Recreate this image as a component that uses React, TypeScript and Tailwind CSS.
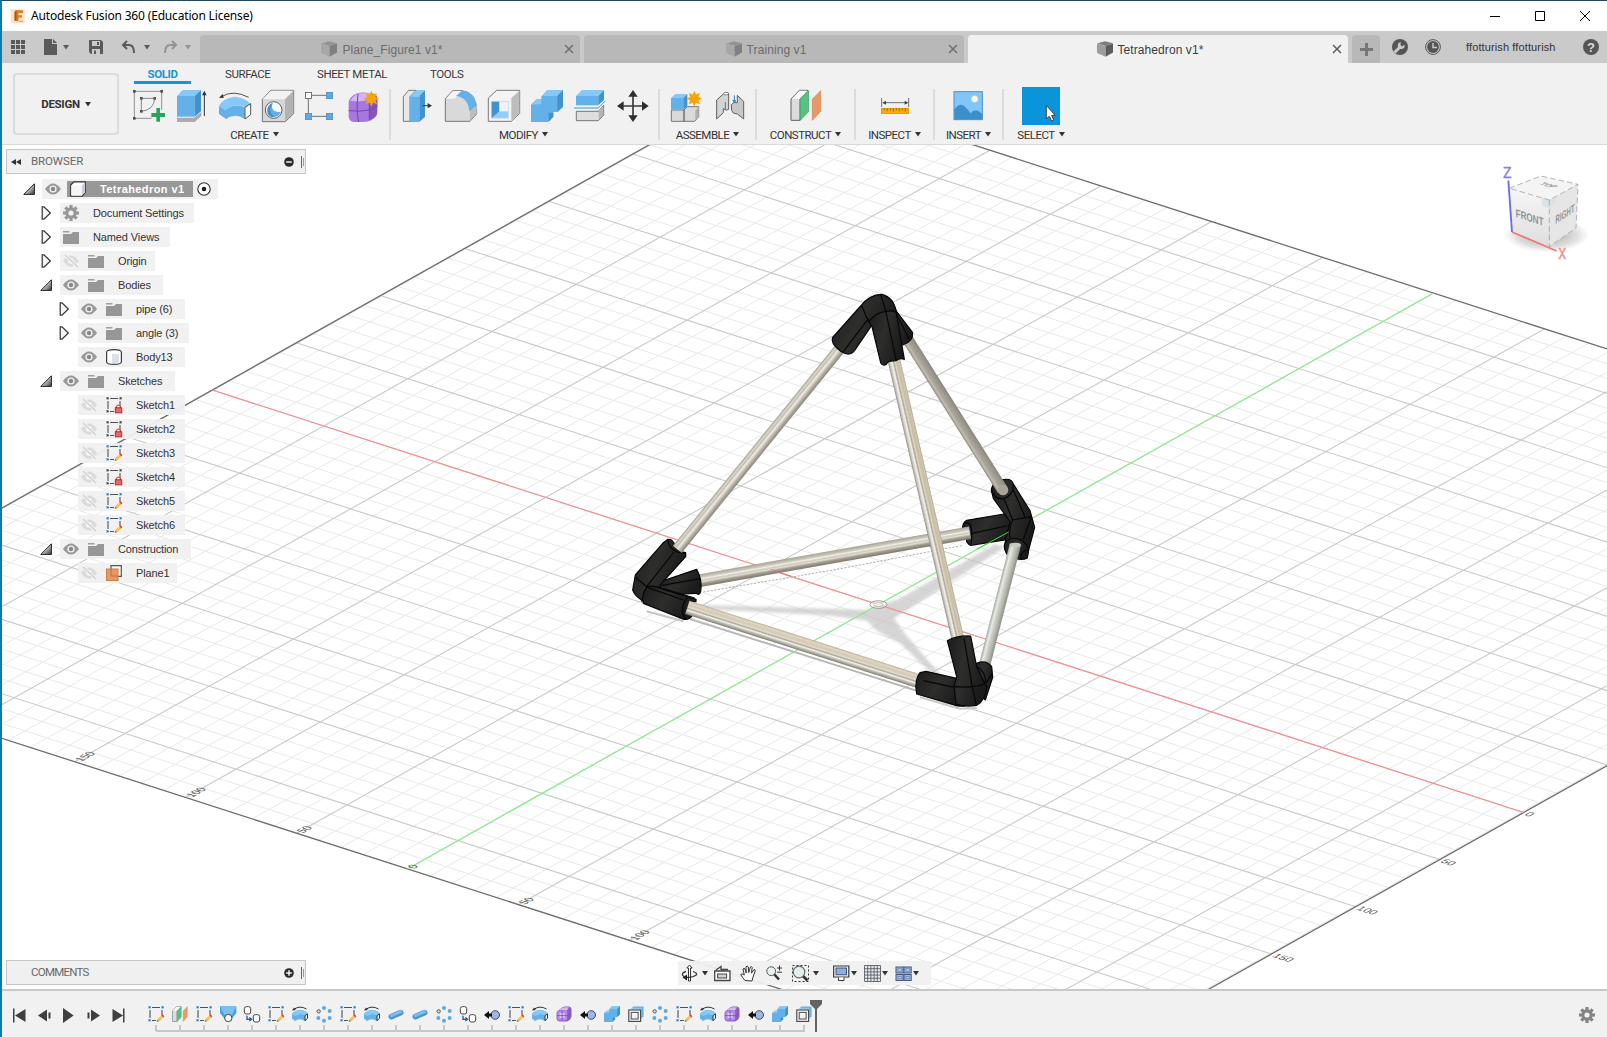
import React from "react";

const SANS = "font-['Liberation_Sans',Arial,sans-serif]";
const ROBOTO = "font-[Roboto,'Liberation_Sans',sans-serif]";

/* ---------- shared bits ---------- */

const Caret = ({ className = "" }: { className?: string }) => (
  <svg viewBox="0 0 6 5" className={"h-[5px] w-[6px] shrink-0 overflow-visible " + className}>
    <path d="M0 0H6L3 4.4Z" fill="currentColor" />
  </svg>
);

type VB = { box: string; w?: number; h?: number; className?: string; children: React.ReactNode };
const Draw = ({ box, w = 32, h = 32, className = "", children }: VB) => (
  <svg viewBox={box} width={w} height={h} className={"shrink-0 overflow-visible " + className}>
    {children}
  </svg>
);

const GREY = "#5f6164";
const BLUE = "#64b0e8";
const LIGHT = "#86c8f8";
const DARK = "#4193cf";

const Star = ({ x, y, r = 24 }: { x: number; y: number; r?: number }) => {
  const pts = Array.from({ length: 16 }, (_, i) => {
    const a = (i * Math.PI) / 8;
    const q = i % 2 ? r * 0.56 : r;
    return `${(x + q * Math.sin(a)).toFixed(1)},${(y - q * Math.cos(a)).toFixed(1)}`;
  }).join(" ");
  return <polygon points={pts} fill="#f7a30a" />;
};

/* ---------- title bar ---------- */

const TitleBar = () => (
  <div className="flex h-[30px] shrink-0 items-center bg-white pl-[8px]">
    <Draw box="30 24 46 46" w={15} h={15}>
      <rect x="32" y="24" width="43" height="44" rx="3" fill="#fbe3cd" />
      <path d="M46 28H70V36H56V43H67V50H56V62L44 60V33Z" fill="#d97f23" />
      <path d="M44 33L50 28V60L44 60Z" fill="#a85a10" />
      <path d="M58 62H70" stroke="#e9a566" strokeWidth="4" />
    </Draw>
    <span className="ml-[6px] font-['Noto_Sans',sans-serif] text-[12px] leading-none tracking-[-0.17px] text-black">
      Autodesk Fusion 360 (Education License)
    </span>
    <div className="ml-auto flex items-center gap-[35px] pr-[17px] text-black">
      <Draw box="0 0 10 10" w={10} h={10}><path d="M0 5.5H10" stroke="currentColor" /></Draw>
      <Draw box="0 0 10 10" w={10} h={10}><path d="M.5 .5H9.5V9.5H.5Z" fill="none" stroke="currentColor" /></Draw>
      <Draw box="0 0 10 10" w={10} h={10}><path d="M0 0L10 10M10 0L0 10" stroke="currentColor" /></Draw>
    </div>
  </div>
);

/* ---------- document tabs ---------- */

const DocTab = ({ name, active = false }: { name: string; active?: boolean }) => (
  <div
    className={
      "relative flex h-[28px] w-[380px] shrink-0 items-center justify-center rounded-t-[4px] pr-[16px] text-[12px] " +
      (active ? "bg-[#f1f1f1] text-[#3c3c3c]" : "bg-[#b8b8b8] text-[#6c6c6c]")
    }
  >
    <Draw box="0 0 16 16" w={16} h={16} className={active ? "" : "opacity-60"}>
      <path d="M0 2.5L8 .2L16 2.2L9 5Z" fill="#7d7d7d" />
      <path d="M0 2.8L8.6 5V15.8L0 12Z" fill="#9d9d9d" />
      <path d="M8.6 5L16 2.4V11.6L8.6 15.8Z" fill="#5c5c5c" />
    </Draw>
    <span className={SANS + " ml-[5px] mt-px tracking-[0.08px]"}>{name}</span>
    <Draw box="0 0 8 8" w={8} h={8} className={"absolute right-[7px] top-[10px] " + (active ? "text-[#5c5c5c]" : "text-[#707070]")}>
      <path d="M0 0L8 8M8 0L0 8" stroke="currentColor" strokeWidth="1.5" />
    </Draw>
  </div>
);

const TabBar = () => (
  <div className="flex h-[32px] shrink-0 items-end bg-[#cacaca]">
    <div className="flex h-full w-[198px] shrink-0 items-center pl-[9px] text-[#5a5a5a]">
      <Draw box="0 0 14 14" w={14} h={14}>
        {[0, 5, 10].map((y) => [0, 5, 10].map((x) => <rect key={`${x}${y}`} x={x} y={y} width="4" height="4" fill="currentColor" />))}
      </Draw>
      <Draw box="0 0 13 16" w={13} h={16} className="ml-[19px]"><path d="M0 0H8V5H13V16H0ZM9 0L13 4H9Z" fill="currentColor" /></Draw>
      <Caret className="ml-[6px]" />
      <Draw box="0 0 14 14" w={14} h={14} className="ml-[20px]">
        <path d="M0 0H12L14 2V14H2L0 12Z" fill="currentColor" />
        <path d="M3 1H11V6H3ZM3 9H11V14H3Z" fill="#cacaca" />
        <path d="M8 2H10V5H8ZM5 10.5H7V14H5Z" fill="currentColor" />
      </Draw>
      <Draw box="0 0 13 12" w={13} h={12} className="ml-[19px]">
        <path d="M5 0L1 4L5 8M1 4H7C11 4 12 7 12 12" fill="none" stroke="currentColor" strokeWidth="2" />
      </Draw>
      <Caret className="ml-[9px]" />
      <Draw box="0 0 13 12" w={13} h={12} className="ml-[14px] text-[#939393]">
        <path d="M8 0L12 4L8 8M12 4H6C2 4 1 7 1 12" fill="none" stroke="currentColor" strokeWidth="2" />
      </Draw>
      <Caret className="ml-[8px] text-[#939393]" />
    </div>
    <div className="flex gap-[4px]">
      <DocTab name="Plane_Figure1 v1*" />
      <DocTab name="Training v1" />
      <DocTab name="Tetrahedron v1*" active />
      <div className="flex h-[28px] w-[28px] items-center justify-center rounded-t-[4px] bg-[#b8b8b8]">
        <Draw box="0 0 13 13" w={13} h={13}><path d="M6.5 0V13M0 6.5H13" stroke="#777" strokeWidth="3" /></Draw>
      </div>
    </div>
    <div className="flex h-full flex-1 items-center pl-[12px] text-[#555]">
      <Draw box="0 0 16 16" w={16} h={16}>
        <circle cx="8" cy="8" r="8" fill="currentColor" />
        <path d="M2.5 13.5L8.5 7.5" stroke="#cacaca" strokeWidth="3" />
        <path d="M12.5 5.8A3.4 3.4 0 1 1 9 3.2L8.3 5.6L10 7.4Z" fill="#cacaca" />
      </Draw>
      <Draw box="0 0 16 16" w={16} h={16} className="ml-[17px]">
        <circle cx="8" cy="8" r="7.4" fill="none" stroke="currentColor" />
        <circle cx="8" cy="8" r="5.9" fill="currentColor" />
        <path d="M8 4V8.5H12" stroke="#cacaca" strokeWidth="1.5" fill="none" />
      </Draw>
      <span className={SANS + " ml-[25px] text-[11px] tracking-[0.12px] text-[#333]"}>ffotturish ffotturish</span>
      <div className="ml-auto mr-[8px] flex h-[16px] w-[16px] items-center justify-center rounded-full bg-[#555]">
        <span className={SANS + " text-[13px] font-bold leading-none text-[#dcdcdc]"}>?</span>
      </div>
    </div>
  </div>
);

/* ---------- ribbon icons ---------- */

const Form = () => (
  <>
    <path d="M1046 308Q1046 296 1062 284Q1076 276 1096 278L1118 280Q1134 284 1132 300V338Q1130 350 1118 358Q1108 366 1090 366H1064Q1048 366 1046 350Z" fill="#a678dd" />
    <path d="M1050 302Q1066 280 1082 280H1112L1104 300Q1080 306 1050 302Z" fill="#d5b4fb" />
    <path d="M1108 304Q1120 286 1130 290Q1134 300 1130 344Q1124 354 1108 360Z" fill="#8554bd" />
    <path d="M1046 332Q1078 336 1108 330L1132 318M1074 282Q1068 330 1076 366M1108 300V360" fill="none" stroke="#7444ad" strokeWidth="3" />
  </>
);
const FormSmall = () => (
  <>
    <path d="M3 4Q6 .5 9 .5H13Q15.5 .8 15.5 3.5V10Q15 14 11 15.5H3.5Q.5 15 .5 12V7Q.6 5 3 4Z" fill="#8a5cc2" />
    <rect x="1.2" y="4.6" width="10" height="10" rx="2" fill="#b48ce6" />
    <path d="M3 4Q6 1.2 9 1.2H13L11 4.4Z" fill="#d3b4f7" />
    <path d="M3.6 7H8.8V12H3.6Z" fill="#d9c2f8" />
    <path d="M1.2 9.6H11.5L15 7.5M6.2 4.5V14.6" fill="none" stroke="#7444ad" strokeWidth=".7" />
  </>
);
const SketchCreate = () => (
  <Draw box="399 270 96 96">
    <path d="M403 274H485V330M403 274V355H455" fill="none" stroke={GREY} strokeWidth="2" />
    {[[399, 270], [481, 270], [399, 351], [420, 291], [460, 291], [420, 330]].map(([x, y]) => <rect key={`${x}-${y}`} x={x} y={y} width="8" height="8" fill="#4c4e50" />)}
    <path d="M424 295H464Q462 330 424 334Z" fill="none" stroke={GREY} strokeWidth="2.2" />
    <path d="M469 324H480V339H495V351H480V365H469V351H454V339H469Z" fill="#27a65a" />
  </Draw>
);
const Extrude = () => (
  <Draw box="528 270 96 96">
    <path d="M531 353H582L604 336V348L584 366H531Z" fill="#acacac" />
    <path d="M531 288L548 270H603L584 288Z" fill={LIGHT} />
    <path d="M531 288H584V350H531Z" fill={BLUE} />
    <path d="M584 288L603 270V334L584 350Z" fill={DARK} />
    <path d="M613 348V284" stroke="#333" strokeWidth="3" /><path d="M606 286L613 272L620 286Z" fill="#333" />
  </Draw>
);
const RevolveShape = () => (
  <>
    <path d="M664 290Q700 268 746 292" fill="none" stroke="#333" strokeWidth="2.5" />
    <path d="M657 293L668 282L671 294Z" fill="#333" />
    <path d="M657 318Q666 296 704 290Q735 292 752 312L736 322Q706 306 676 330Z" fill={LIGHT} />
    <path d="M657 318L676 330Q706 308 734 322V357Q706 338 678 357L657 342Z" fill={BLUE} />
    <path d="M735 322L752 311V344L735 357Z" fill="#fff" stroke="#333" strokeWidth="2.5" />
  </>
);
const RevolveSmall = () => (
  <>
    <path d="M2 3.2Q8 -.8 14.5 3" fill="none" stroke="#333" strokeWidth="1" />
    <path d="M0 4.4L2 1.4L3.8 4Z" fill="#333" />
    <path d="M0 8Q2 4.4 8 4.2Q14 4.4 16 7.6V12L13 15.2Q8 11.6 3 15L0 12.4Z" fill={BLUE} />
    <path d="M0 8Q2 4.4 8 4.2Q14 4.4 16 7.6L13 9.4Q8 6.8 3 10Z" fill={LIGHT} />
    <path d="M13 9.6L15.5 8V12.2L13 14.6Z" fill="#fff" stroke="#333" strokeWidth="1" />
  </>
);
const Revolve = () => <Draw box="657 270 96 96"><RevolveShape /></Draw>;
const Hole = () => (
  <Draw box="786 270 96 96">
    <path d="M787 298L812 271H881V341L856 365H787Z" fill="#d6d6d6" stroke={GREY} strokeWidth="2.5" />
    <path d="M788 298L813 272H880L855 298Z" fill="#f2f2f2" /><path d="M855 298L880 273V340L855 364Z" fill="#b3b3b3" />
    <circle cx="821" cy="330" r="25" fill="#f8f8f8" stroke={GREY} strokeWidth="3" />
    <path d="M818 308Q808 338 842 336Q834 354 812 350Q800 344 802 326Q806 312 818 308Z" fill={DARK} />
    <path d="M818 308Q808 338 842 336Q834 350 818 346Q804 334 818 308Z" fill={BLUE} />
  </Draw>
);
const Pattern = () => (
  <Draw box="915 270 96 96">
    <path d="M925 296V340M936 286H978M936 349H978" stroke="#555" strokeWidth="2.5" />
    <rect x="916.5" y="277.5" width="18" height="18" fill="#fff" stroke="#555" strokeWidth="2.5" />
    {[[978, 276], [915, 339], [978, 339]].map(([x, y]) => <rect key={`${x}-${y}`} x={x + 1} y={y + 1} width="19" height="19" fill="#5ea9e0" stroke="#4186b8" strokeWidth="2" />)}
  </Draw>
);
const FormIcon = () => <Draw box="1044 270 96 96"><Form /><Star x={1114} y={296} /></Draw>;

const PressPull = () => (
  <Draw box="66 270 96 96">
    <path d="M70 290L86 271H108L90 290V364H70Z" fill="#e8e8e8" stroke={GREY} strokeWidth="2.5" />
    <path d="M90 290L108 270H134L118 288Z" fill={LIGHT} /><path d="M90 289H118V366H90Z" fill={BLUE} /><path d="M118 288L135 270V350L118 366Z" fill={DARK} />
    <path d="M128 317H145" stroke="#333" strokeWidth="3" /><path d="M143 309L156 317L143 325Z" fill="#333" />
  </Draw>
);
const Fillet = () => (
  <Draw box="195 270 96 96">
    <path d="M196 296L218 272H246Q290 276 290 338V342L270 364H196Z" fill="#d9d9d9" stroke={GREY} strokeWidth="2.5" />
    <path d="M198 296L219 273H244L224 296Z" fill="#f5f5f5" />
    <path d="M270 330L290 318V341L270 363Z" fill="#bcbcbc" />
    <path d="M228 288L246 272Q284 274 290 316L268 334Q264 292 228 288Z" fill={BLUE} />
  </Draw>
);
const Shell = () => (
  <Draw box="324 270 96 96">
    <path d="M325 294L350 271H419V340L394 364H325Z" fill="#f4f4f4" stroke={GREY} strokeWidth="2.5" />
    <path d="M394 294L418 272V339L394 363Z" fill="#bdbdbd" />
    <path d="M334 304H386V355H334Z" fill="#92cdf8" stroke="#e0e0e0" strokeWidth="2" />
    <path d="M335 305H358V334L335 354Z" fill={DARK} /><path d="M358 306H385V334H358Z" fill="#f1f1f1" />
  </Draw>
);
const CombineShape = () => (
  <>
    <path d="M453 314L470 298H484V290L502 270H549V320L532 336H520V350L504 366H453Z" fill={BLUE} />
    <path d="M484 290L502 270H549L532 288H484Z" fill={LIGHT} /><path d="M453 314L470 298H484V312Z" fill={LIGHT} />
    <path d="M532 288L549 270V320L532 336ZM506 338H520V350L506 366Z" fill={DARK} />
  </>
);
const Combine = () => <Draw box="453 270 96 96"><CombineShape /></Draw>;
const Split = () => (
  <Draw box="582 270 96 96">
    <path d="M588 288L606 270H672L655 288Z" fill={LIGHT} /><path d="M588 288H655V316H588Z" fill={BLUE} /><path d="M655 288L672 270V300L655 316Z" fill={DARK} />
    <path d="M589 334H655L671 316V346L655 362H589Z" fill="#dedede" stroke={GREY} strokeWidth="2.5" /><path d="M656 334L670 318V346L656 360Z" fill="#b5b5b5" />
    <path d="M582 324H655L677 302" fill="none" stroke="#fff" strokeWidth="8" />
    <path d="M582 324H655L677 302" fill="none" stroke="#2f84c4" strokeWidth="3" />
  </Draw>
);
const Move = () => (
  <Draw box="711 270 96 96">
    <path d="M759 282V352M724 318H794" stroke="#3a3a3a" strokeWidth="5" />
    <path d="M745 290L759 270L773 290ZM745 346L759 366L773 346ZM731 304L711 318L731 332ZM786 304L806 318L786 332Z" fill="#2f2f2f" />
  </Draw>
);
const NewComp = () => (
  <Draw box="873 270 96 96">
    <path d="M874 330H912V364H874ZM912 330L922 320H956V350L944 364H912Z" fill="#dadada" stroke={GREY} strokeWidth="2.5" />
    <path d="M946 332L956 321V350L946 361Z" fill="#b0b0b0" />
    <path d="M873 294L886 282H922L910 294Z" fill={LIGHT} /><path d="M873 294H910V329H873Z" fill={BLUE} /><path d="M910 294L922 282V318L910 329Z" fill={DARK} />
    <Star x={943} y={296} />
  </Draw>
);
const Joint = () => (
  <Draw box="1002 270 96 96">
    <path d="M1010 300L1030 282Q1038 274 1046 280V328Q1040 334 1030 326V338L1010 357Z" fill="#d4d4d4" stroke={GREY} strokeWidth="3" />
    <ellipse cx="1038" cy="281" rx="7" ry="4" fill="#fafafa" stroke={GREY} strokeWidth="2" />
    <path d="M1054 314Q1060 304 1072 308V286L1091 304V357L1072 342Q1058 342 1055 332Z" fill="#c7c7c7" stroke={GREY} strokeWidth="3" />
    <path d="M1036 330V306M1063 286V302" stroke="#2a86c6" strokeWidth="3" />
    <path d="M1057 300L1063 310L1069 300Z" fill="#2a86c6" />
  </Draw>
);
const PlanesShape = () => (
  <>
    <path d="M153 297L178 271H204L180 297V361H153Z" fill="#dcdcdc" stroke={GREY} strokeWidth="3" /><path d="M155 296L179 272H202L180 296Z" fill="#fafafa" />
    <path d="M181 298L206 272V334L181 361Z" fill="#54c482" stroke="#31a261" strokeWidth="2" />
    <path d="M217 298L242 272V334L217 361Z" fill="#e79a67" stroke="#d07d46" strokeWidth="2" />
  </>
);
const Construct = () => <Draw box="150 270 96 96"><PlanesShape /></Draw>;
const Inspect = () => (
  <Draw box="417 270 96 96">
    <path d="M425 294V321M506 294V321M430 308H500" stroke="#555" strokeWidth="2.5" />
    <path d="M427 308L438 302V314ZM505 308L494 302V314Z" fill="#444" />
    <rect x="424" y="325" width="82" height="16" fill="#ffaa00" stroke="#d88d00" strokeWidth="2" />
    {[433, 442, 451, 460, 469, 478, 487, 496].map((x, i) => <path key={x} d={`M${x} 325v${i % 2 ? 9 : 6}`} stroke="#70450a" strokeWidth="2" />)}
  </Draw>
);
const Insert = () => (
  <Draw box="640 270 96 96">
    <rect x="643" y="275" width="85" height="84" fill="#80c6fb" stroke="#4990c5" strokeWidth="3" />
    <path d="M644 328Q662 302 680 324L693 340Q708 320 727 342V358H644Z" fill="#3c8fcb" />
    <circle cx="705" cy="297" r="10" fill="#fbfbe2" stroke="#cfdcba" strokeWidth="2" />
  </Draw>
);
const Select = () => (
  <Draw box="846 261 114 114" w={38} h={38} className="bg-[#0a94dc]">
    <path d="M858 330Q850 300 872 282Q895 266 920 276Q945 286 940 312M858 330Q866 350 888 346L912 325" fill="none" stroke="#12a58f" strokeWidth="2.5" strokeDasharray="9 6" />
    <path d="M919 316V356L928 349L935 363L941 360L935 346H945Z" fill="#fff" stroke="#333" strokeWidth="2.5" />
  </Draw>
);

const Group = ({ label, className, children, labelClass = "" }: { label: string; className: string; children: React.ReactNode; labelClass?: string }) => (
  <div className={"flex h-[51px] shrink-0 flex-col items-center border-r-2 border-[#dcdcdc] " + className}>
    <div className="mt-[1px] flex h-[32px] items-center gap-[11px]">{children}</div>
    <div className={"mt-[6px] flex items-center gap-[4px] " + labelClass}>
      <span className={ROBOTO + " text-[11.5px] leading-[14px] tracking-[-0.5px] text-[#333]"}>{label}</span>
      <Caret className="-mt-[2px] text-[#333]" />
    </div>
  </div>
);

const Ribbon = () => (
  <div className="flex h-[82px] shrink-0 border-b border-[#d9d9d9] bg-[#f1f1f1]">
    <div className="ml-[11px] mt-[10px] flex h-[62px] w-[106px] shrink-0 items-center justify-center gap-[5px] rounded-[4px] border-2 border-[#dcdcdc]">
      <span className={ROBOTO + " mt-px text-[11.5px] font-bold tracking-[-0.3px] text-[#333]"}>DESIGN</span>
      <Caret className="text-[#333]" />
    </div>
    <div className="flex flex-col">
      <div className={ROBOTO + " flex h-[21px] items-start text-[11.5px] leading-[22px] tracking-[-0.4px] text-[#3a3a3a]"}>
        <div className="ml-[15px] h-[21px] w-[57px] border-b-[3px] border-[#1795d4] text-center font-bold text-[#1795d4]">SOLID</div>
        <span className="ml-[34px] w-[47px] whitespace-nowrap">SURFACE</span>
        <span className="ml-[45px] w-[68px] whitespace-nowrap">SHEET METAL</span>
        <span className="ml-[45px] whitespace-nowrap">TOOLS</span>
      </div>
      <div className="mt-[5px] flex">
        <Group label="CREATE" className="w-[272px] pl-[4px]" labelClass="-ml-[3px]">
          <SketchCreate /><Extrude /><Revolve /><Hole /><Pattern /><FormIcon />
        </Group>
        <Group label="MODIFY" className="w-[269px] pl-[2px]" labelClass="-ml-[4px]">
          <PressPull /><Fillet /><Shell /><Combine /><Split /><Move />
        </Group>
        <Group label="ASSEMBLE" className="w-[97px] pl-[2px]" labelClass="-ml-[2px]"><NewComp /><Joint /></Group>
        <Group label="CONSTRUCT" className="w-[99px]"><Construct /></Group>
        <Group label="INSPECT" className="w-[79px]"><Inspect /></Group>
        <Group label="INSERT" className="w-[69px]"><Insert /></Group>
        <Group label="SELECT" className="w-[76px] border-transparent"><Select /></Group>
      </div>
    </div>
  </div>
);

/* ---------- browser tree ---------- */

const Eye = () => (
  <Draw box="0 0 16 12" w={16} h={12}>
    <path d="M0 6Q4 .5 8 .5T16 6Q12 11.5 8 11.5T0 6Z" fill="#989898" />
    <circle cx="8" cy="6" r="3.6" fill="#f0f0f0" /><circle cx="8" cy="6" r="2.2" fill="#888" />
  </Draw>
);
const EyeOff = () => (
  <Draw box="0 0 16 12" w={16} h={12}>
    <path d="M0 6Q4 .5 8 .5T16 6Q12 11.5 8 11.5T0 6Z" fill="#dadada" />
    <circle cx="8" cy="6" r="3" fill="#f3f3f3" />
    <path d="M2 0L15 12" stroke="#f3f3f3" strokeWidth="3.4" /><path d="M2 0L15 12" stroke="#d2d2d2" strokeWidth="1.5" />
  </Draw>
);
const Folder = () => (
  <Draw box="0 0 16 13" w={16} h={13}>
    <path d="M0 3H8L10 1H16V13H0Z" fill="#979797" /><path d="M0 .8H6.5" stroke="#979797" strokeWidth="1.4" />
  </Draw>
);
const Gear = ({ c = "#979797", hole = "#f0f0f0" }: { c?: string; hole?: string }) => (
  <Draw box="-8 -8 16 16" w={16} h={16}>
    {[0, 45, 90, 135].map((a) => <rect key={a} x="-1.6" y="-8" width="3.2" height="16" fill={c} transform={`rotate(${a})`} />)}
    <circle r="5.7" fill={c} /><circle r="2.6" fill={hole} />
  </Draw>
);
const SketchBase = ({ dot }: { dot: string }) => (
  <>
    <path d="M2 4V12M4 1.5H12M14 4V9M4 14.5H8" fill="none" stroke="#4e5052" strokeWidth="1.1" />
    {[[0, 0], [13, 0], [0, 13]].map(([x, y]) => <rect key={`${x}-${y}`} x={x + 0.5} y={y + 0.2} width="2.2" height="2.2" fill={dot} />)}
  </>
);
const SketchEdit = () => (
  <Draw box="0 0 16 16" w={16} h={16}>
    <SketchBase dot="#1f86d0" />
    <path d="M9 15.6L9.6 12.8L13.4 9.4L15.4 11.4L11.8 15Z" fill="#f8c155" />
    <path d="M13.4 9.4L14.6 8.3L16.4 10.2L15.3 11.4Z" fill="#e8362c" /><path d="M8.6 16L9.4 13.6L11 15.2Z" fill="#8a7a60" />
  </Draw>
);
const SketchLock = () => (
  <Draw box="0 0 16 16" w={16} h={16}>
    <SketchBase dot="#4a4a4a" />
    <path d="M10.4 11V9.4Q12.4 6.6 14.4 9.4V11" fill="none" stroke="#d33c40" strokeWidth="1.2" />
    <rect x="9.3" y="10.8" width="6.4" height="5" fill="#e26a6c" stroke="#b52b30" />
  </Draw>
);
const BodyIcon = () => (
  <Draw box="0 0 16 16" w={16} h={16}>
    <path d="M.6 3Q1 .6 8 .6T15.4 3V13Q15 15.4 8 15.4T.6 13Z" fill="#fff" stroke="#3c3c3c" strokeWidth="1.2" />
    <path d="M6 5H13V14H6Z" fill="#dcdfe6" />
  </Draw>
);
const PlaneIcon = () => (
  <Draw box="0 0 16 16" w={16} h={16}>
    <path d="M5 .7H15.3V11.3H5Z" fill="#fafafa" stroke="#555" strokeWidth="1.2" />
    <rect x=".5" y="4" width="11.5" height="11.5" fill="#e49a66" stroke="#cf7c40" /><path d="M5 4V11H12" stroke="#b87045" fill="none" />
  </Draw>
);
const RootCube = () => (
  <Draw box="0 0 16 16" w={16} h={16}>
    <path d="M.7 4L4 .8H15.2V11.5L12 15.2H.7Z" fill="#fff" stroke="#333" strokeWidth="1.2" />
    <path d="M12 4.4L15 1.4V11.4L12 14.6Z" fill="#c8ccd6" /><path d="M1.4 4.6H12V14.6H1.4Z" fill="#f4f5f8" />
  </Draw>
);

const Twisty = ({ open }: { open?: boolean }) =>
  open === undefined ? <span className="w-[12px] shrink-0" /> : open ? (
    <Draw box="0 0 12 12" w={12} h={12}>
      <defs><linearGradient id="tw" x1="0" y1="0" x2="1" y2="1"><stop offset=".4" stopColor="#ddd" /><stop offset="1" stopColor="#333" /></linearGradient></defs>
      <path d="M.8 11.4H11.4V.8Z" fill="url(#tw)" stroke="#222" strokeWidth="1" />
    </Draw>
  ) : (
    <Draw box="-1 0 12 14" w={12} h={14}>
      <path d="M1.2 .8H3L9.4 7L3 13.2H1.2Z" fill="#f5f5f5" stroke="#333" strokeWidth="1.2" />
    </Draw>
  );

type Row = { name: string; level: 1 | 2; w: number; open?: boolean; eye?: "on" | "off"; icon: React.ReactNode };
const ROWS: Row[] = [
  { name: "Document Settings", level: 1, w: 134, open: false, icon: <Gear /> },
  { name: "Named Views", level: 1, w: 110, open: false, icon: <Folder /> },
  { name: "Origin", level: 1, w: 95, open: false, eye: "off", icon: <Folder /> },
  { name: "Bodies", level: 1, w: 103, open: true, eye: "on", icon: <Folder /> },
  { name: "pipe (6)", level: 2, w: 107, open: false, eye: "on", icon: <Folder /> },
  { name: "angle (3)", level: 2, w: 111, open: false, eye: "on", icon: <Folder /> },
  { name: "Body13", level: 2, w: 107, eye: "on", icon: <BodyIcon /> },
  { name: "Sketches", level: 1, w: 115, open: true, eye: "on", icon: <Folder /> },
  { name: "Sketch1", level: 2, w: 107, eye: "off", icon: <SketchLock /> },
  { name: "Sketch2", level: 2, w: 107, eye: "off", icon: <SketchLock /> },
  { name: "Sketch3", level: 2, w: 107, eye: "off", icon: <SketchEdit /> },
  { name: "Sketch4", level: 2, w: 107, eye: "off", icon: <SketchLock /> },
  { name: "Sketch5", level: 2, w: 107, eye: "off", icon: <SketchEdit /> },
  { name: "Sketch6", level: 2, w: 107, eye: "off", icon: <SketchEdit /> },
  { name: "Construction", level: 1, w: 131, open: true, eye: "on", icon: <Folder /> },
  { name: "Plane1", level: 2, w: 99, eye: "off", icon: <PlaneIcon /> },
];

const PanelHeader = ({ title, plus = false }: { title: string; plus?: boolean }) => (
  <div className="flex h-[25px] w-[300px] items-center border border-[#c6c6c6] bg-[#f0f0f0]">
    <div className="ml-[4px] w-[20px]">
      {!plus && <Draw box="0 0 10 6" w={10} h={6}><path d="M5 0V6L0 3ZM10 0V6L5 3Z" fill="#333" /></Draw>}
    </div>
    <span className={ROBOTO + " text-[11.5px] text-[#686868] " + (plus ? "tracking-[-0.75px]" : "tracking-[-0.1px]")}>{title}</span>
    <Draw box="0 0 10 10" w={10} h={10} className="ml-auto">
      <circle cx="5" cy="5" r="4.8" fill="#2b2b2b" /><path d="M2.2 5H7.8" stroke="#fff" strokeWidth="1.4" />
      {plus && <path d="M5 2.2V7.8" stroke="#fff" strokeWidth="1.4" />}
    </Draw>
    <span className="ml-[7px] mr-px flex gap-[1px]"><i className="h-[12px] w-px bg-[#666]" /><i className="h-[8px] w-px self-center bg-[#999]" /></span>
  </div>
);

const Browser = () => (
  <div className="flex flex-col items-start">
    <PanelHeader title="BROWSER" />
    <div className="mt-[5px] flex h-[20px] items-center pl-[17px]">
      <Twisty open />
      <div className="ml-[7px] flex h-[20px] w-[176px] items-center bg-[#f0f0f0]/95 pl-[3px]">
        <Eye />
        <div className="ml-[6px] flex h-[16px] w-[126px] items-center bg-[#989898] pl-[3px]">
          <RootCube />
          <span className={SANS + " ml-[14px] whitespace-nowrap text-[11px] font-bold tracking-[0.42px] text-white"}>Tetrahedron v1</span>
        </div>
        <Draw box="0 0 14 14" w={14} h={14} className="ml-[4px]">
          <circle cx="7" cy="7" r="6.2" fill="#fff" stroke="#333" strokeWidth="1.1" /><circle cx="7" cy="7" r="2.3" fill="#222" />
        </Draw>
      </div>
    </div>
    {ROWS.map((r) => (
      <div key={r.name} className={"mt-[4px] flex h-[20px] items-center " + (r.level === 1 ? "pl-[34px]" : "pl-[52px]")}>
        <Twisty open={r.open} />
        <div className="ml-[8px] flex h-[20px] items-center bg-[#f0f0f0]/95 pl-[3px]" style={{ width: r.w }}>
          {r.eye && <span className="mr-[9px]">{r.eye === "on" ? <Eye /> : <EyeOff />}</span>}
          {r.icon}
          <span className={SANS + " ml-[14px] mt-px whitespace-nowrap text-[11px] tracking-[-0.12px] text-[#333]"}>{r.name}</span>
        </div>
      </div>
    ))}
  </div>
);

/* ---------- 3D viewport ---------- */

const O = [878.5, 604.6];
const U = [110.95, 35.73];
const V = [84.1, -47.2];
const U0 = -6.005, U1 = 5.816, V0 = -5.6, V1 = 6.6;
const P = (u: number, v: number) => [O[0] + u * U[0] + v * V[0], O[1] + u * U[1] + v * V[1]];
const seg = (a: number[], b: number[]) => `M${a[0].toFixed(1)} ${a[1].toFixed(1)}L${b[0].toFixed(1)} ${b[1].toFixed(1)}`;
const minor: string[] = [];
const major: string[] = [];
for (let i = -30; i <= 29; i++) (i % 5 ? minor : major).push(seg(P(i / 5, V0), P(i / 5, V1)));
for (let j = -28; j <= 33; j++) (j % 5 ? minor : major).push(seg(P(U0, j / 5), P(U1, j / 5)));
const outline = [P(U0, V0), P(U1, V0), P(U1, V1), P(U0, V1)].map((p) => p.join(",")).join(" ");

type Stop = [number, string];
const TUBES: Record<string, { a: [number, number]; b: [number, number]; w: number; stops: Stop[] }> = {
  upperLeft: { a: [722, 233], b: [232, 838], w: 34, stops: [[0, "#8a8578"], [0.25, "#b1ac9f"], [0.45, "#dedad0"], [0.55, "#f0ede5"], [0.66, "#c3beb1"], [0.82, "#dad6cb"], [1, "#a39e91"]] },
  front: { a: [880, 262], b: [1074, 1108], w: 38, stops: [[0, "#b3a78d"], [0.12, "#d0c6b0"], [0.3, "#c8bda5"], [0.45, "#ddd5c2"], [0.56, "#aaa598"], [0.68, "#f4f2ec"], [0.84, "#d2d0c8"], [1, "#918e82"]] },
  upperRight: { a: [922, 206], b: [1208, 660], w: 34, stops: [[0, "#8b867b"], [0.3, "#9d988d"], [0.6, "#aaa59b"], [0.8, "#c1bcb2"], [1, "#8d887e"]] },
  back: { a: [298, 932], b: [1110, 788], w: 38, stops: [[0, "#a8a396"], [0.25, "#cbc7bb"], [0.38, "#f1eee5"], [0.5, "#cdc8bc"], [0.6, "#e2ded4"], [0.76, "#a39d90"], [1, "#7f796d"]] },
  base: { a: [262, 1012], b: [958, 1234], w: 42, stops: [[0, "#b9ae99"], [0.14, "#e0d6c2"], [0.34, "#d3c9b5"], [0.48, "#e4dccb"], [0.58, "#a9a598"], [0.68, "#f4f2ec"], [0.82, "#bbb9ae"], [1, "#7f7c71"]] },
  right: { a: [1246, 824], b: [1154, 1184], w: 34, stops: [[0, "#8b8e85"], [0.3, "#b4b7ae"], [0.55, "#cdd0c8"], [0.75, "#e9ebe6"], [1, "#a3a69d"]] },
};

const Tube = ({ id }: { id: string }) => {
  const { a, b, w, stops } = TUBES[id];
  const len = Math.hypot(b[0] - a[0], b[1] - a[1]);
  const deg = (Math.atan2(b[1] - a[1], b[0] - a[0]) * 180) / Math.PI;
  return (
    <g transform={`translate(${a[0]} ${a[1]}) rotate(${deg.toFixed(3)})`}>
      <linearGradient id={"tube-" + id} x1="0" y1="0" x2="0" y2="1">
        {stops.map(([o, c]) => <stop key={o} offset={o} stopColor={c} />)}
      </linearGradient>
      <rect x="0" y={-w / 2} width={len} height={w} fill={`url(#tube-${id})`} />
    </g>
  );
};

const Rubber = ({ children }: { children: React.ReactNode }) => (
  <g fill="url(#rubber)" stroke="#060606" strokeWidth="3.6" strokeLinejoin="round">{children}</g>
);

const Model = () => (
  <g transform="translate(600 270) scale(.33333)">
    <g fill="none">
      <path d="M140 1024L250 1054" stroke="#c4c4c4" strokeWidth="6" />
      <path d="M270 1048L950 1262" stroke="#b5b5b5" strokeWidth="5" />
      <path d="M290 1030L945 1240" stroke="#cfcfcf" strokeWidth="9" />
      <path d="M960 1282L1080 1316L1130 1314" stroke="#cacaca" strokeWidth="6" />
      <path d="M310 966L700 900L1090 826" stroke="#b0b0b0" strokeWidth="3" strokeDasharray="7 4" />
    </g>

    {/* right connector */}
    <Rubber>
      <path d="M1100 751L1212 732L1240 745V800L1225 808L1112 826Q1106 824 1100 815L1098 795L1088 780Q1086 760 1100 751Z" />
      <path d="M1112 765Q1118 790 1113 822M1112 765Q1100 752 1090 762M1116 790L1220 768" fill="none" />
      <path d="M1174 660Q1178 630 1215 628Q1236 626 1240 642L1290 722L1304 772L1280 862Q1250 840 1215 820L1230 755L1180 685Z" />
      <path d="M1174 660Q1182 690 1212 686Q1242 674 1240 642M1212 686L1238 750L1294 740M1240 660L1275 740M1238 750Q1225 775 1230 805M1294 740L1270 808" fill="none" />
      <path d="M1214 822Q1226 800 1252 806Q1280 814 1286 840L1282 864Q1262 875 1225 858Q1210 840 1214 822Z" />
      <path d="M1262 866Q1262 840 1286 840" fill="none" />
    </Rubber>
    <path d="M1130 838L1226 786" stroke="#3ddc3d" strokeWidth="3" />
    <Tube id="upperRight" />
    <circle cx="1209" cy="660" r="16" fill="#a8a399" />
    <Tube id="back" />
    <path d="M512 898L572 918" stroke="#f06a6a" strokeWidth="3" opacity=".7" />

    {/* left connector */}
    <Rubber>
      <path d="M182 935L290 898Q308 930 302 965Q298 978 288 970L180 975Z" />
      <path d="M186 946L302 926" fill="none" />
      <path d="M204 808Q215 806 222 820Q230 846 257 848V860L188 936L140 1000Q105 980 98 960L106 915L190 818Z" />
      <path d="M204 812Q210 848 255 850M222 846L140 950L106 922M140 950L125 995" fill="none" />
      <path d="M142 950Q160 944 190 958L288 988V995Q266 995 264 1012Q266 1036 276 1038Q268 1050 252 1048L130 1000Q122 975 142 950Z" />
      <path d="M142 952L250 990M262 982Q236 1015 256 1046M190 956L284 984" fill="none" />
    </Rubber>
    <Tube id="upperLeft" />
    <Tube id="base" />
    <Tube id="right" />
    <ellipse cx="1246" cy="825" rx="17" ry="7" fill="#c9ccc4" />

    {/* top connector */}
    <Rubber>
      <path d="M858 85Q880 95 890 125L938 188Q940 215 908 225L884 180Z" />
      <path d="M888 130L928 208" fill="none" />
      <path d="M782 108Q808 74 845 73Q882 82 888 125L814 168L765 240Q750 262 722 244Q690 220 698 202Z" />
      <path d="M784 105L806 155M806 145L730 245M842 74L858 125" fill="none" />
    </Rubber>
    <Tube id="front" />
    <Rubber>
      <path d="M806 155Q825 128 858 124Q882 120 889 128L913 268Q900 262 888 272Q862 272 860 282Q848 290 842 278L816 170Z" />
      <path d="M858 126L888 270" fill="none" />
    </Rubber>

    {/* bottom connector */}
    <Rubber>
      <path d="M1130 1180Q1158 1168 1175 1190L1178 1222L1156 1290L1120 1250Z" />
      <path d="M1132 1190Q1156 1205 1158 1238L1176 1212" fill="none" />
      <path d="M978 1204L1070 1225L1100 1306Q1080 1312 1060 1304L950 1272Q942 1230 960 1208Z" />
      <path d="M970 1232L1062 1252" fill="none" />
      <path d="M1042 1112Q1070 1096 1112 1098L1130 1190L1160 1252Q1158 1290 1130 1306Q1095 1312 1068 1302L1062 1250L1070 1220Z" />
      <path d="M1092 1104L1116 1245L1128 1304M1064 1250Q1130 1255 1158 1238" fill="none" />
    </Rubber>
  </g>
);

const AxisLabel = ({ u, t }: { u: number; t: string }) => {
  const p = P(u, V0);
  return <text transform={`matrix(.885 -.497 1.05 .34 ${p[0] + 6.5} ${p[1]})`} fontSize="10">{t}</text>;
};
const SideLabel = ({ v, t }: { v: number; t: string }) => {
  const p = P(U1, v);
  return <text transform={`matrix(1.05 .34 -.885 .497 ${p[0]} ${p[1] + 2.5})`} fontSize="10">{t}</text>;
};

const Scene = () => (
  <svg viewBox="2 145 1605 844" width={1605} height={844} className="block">
    <defs>
      <linearGradient id="rubber" x1="0" y1="0" x2="1" y2=".4">
        <stop offset="0" stopColor="#1b1b1b" /><stop offset=".5" stopColor="#2e2e2d" /><stop offset="1" stopColor="#1a1a1a" />
      </linearGradient>
      <filter id="soft" x="-5%" y="-5%" width="110%" height="110%"><feGaussianBlur stdDeviation="4" /></filter>
    </defs>
    <path d={minor.join("")} stroke="#e9e9e9" strokeWidth="1" fill="none" />
    <path d={major.join("")} stroke="#c9c9c9" strokeWidth="1.1" fill="none" />
    <polygon points={outline} fill="none" stroke="#6e6e6e" strokeWidth="1.3" />
    <path transform="translate(600 270) scale(.33333)" fill="#c0c0c0" opacity=".65" filter="url(#soft)"
      d="M285 1004L800 1020L900 985L1185 822L1215 832L930 1015L882 1045L910 1085L1030 1225L990 1205L900 1120L830 1082L800 1052L680 1036L290 1016Z" />
    <path d={seg(P(U0, 0), P(U1, 0))} stroke="#ff8a8a" strokeWidth="1.1" />
    <path d={seg(P(0, V0), P(0, V1))} stroke="#86f386" strokeWidth="1.1" />
    <ellipse cx="878.5" cy="604.6" rx="8.5" ry="3.8" fill="#fff" fillOpacity=".4" stroke="#9a9a9a" />
    <ellipse cx="878.5" cy="604.6" rx="4.5" ry="2" fill="#fff" fillOpacity=".5" stroke="#b5b5a0" strokeWidth=".8" />
    <g fontFamily="'Liberation Sans', sans-serif" fill="#555">
      <AxisLabel u={-3} t="150" /><AxisLabel u={-2} t="100" /><AxisLabel u={-1} t="50" />
      <AxisLabel u={0} t="0" /><AxisLabel u={1} t="50" /><AxisLabel u={2} t="100" />
      <SideLabel v={0} t="0" /><SideLabel v={-1} t="50" /><SideLabel v={-2} t="100" /><SideLabel v={-3} t="150" />
    </g>
    <Model />
  </svg>
);

const ViewCube = () => (
  <Draw box="1005 480 315 306" w={105} h={102}>
    <defs>
      <radialGradient id="cs"><stop offset="0" stopColor="#888" stopOpacity=".8" /><stop offset=".7" stopColor="#aaa" stopOpacity=".4" /><stop offset="1" stopColor="#bbb" stopOpacity="0" /></radialGradient>
      <linearGradient id="cf" x1="0" y1="0" x2="0" y2="1"><stop offset="0" stopColor="#f6f6f6" /><stop offset="1" stopColor="#dedede" /></linearGradient>
    </defs>
    <ellipse cx="1160" cy="705" rx="128" ry="52" fill="url(#cs)" />
    <path d="M1048 565L1142 528L1254 553L1168 600Z" fill="#f4f4f4" />
    <path d="M1048 565L1168 600V740L1056 696Z" fill="url(#cf)" />
    <path d="M1168 600L1254 553L1248 684L1168 740Z" fill="#e6e6e6" />
    <path d="M1146 592L1168 600L1186 590V615L1168 625L1146 617Z" fill="#dde2e7" />
    <path d="M1048 565L1142 528L1254 553L1168 600ZM1168 600V740L1248 684L1254 553" fill="none" stroke="#a6a6a6" strokeWidth="2.5" strokeDasharray="17 9" />
    <path d="M1045 542L1056 696" stroke="#6a6af0" strokeWidth="5.5" />
    <path d="M1056 696L1190 753" stroke="#ee7a7a" strokeWidth="5.5" />
    <g fontFamily="'Liberation Sans', sans-serif" fontWeight="bold" fill="#8f959a">
      <text transform="matrix(.74 .24 .03 1.05 1067 651)" fontSize="33">FRONT</text>
      <text transform="matrix(.56 -.36 -.03 1.05 1186 672)" fontSize="33">RIGHT</text>
      <text transform="matrix(.95 .24 -1 .38 1136 553)" fontSize="23">TOP</text>
    </g>
    <g fontFamily="Roboto, sans-serif" fontSize="43" strokeWidth="1.2">
      <text x="1029" y="533" fill="#8080f2" stroke="#8080f2">Z</text><text x="1195" y="777" fill="#f48f8f" stroke="#f48f8f" textLength="24" lengthAdjust="spacingAndGlyphs">X</text>
    </g>
  </Draw>
);

const NavBar = () => (
  <div className="flex h-[24px] w-[253px] items-center bg-[#f0f0f0]/95 text-[#333]">
    <Draw box="0 0 17 17" w={17} h={17} className="ml-[3px]">
      <path d="M7.5 16V3H5.8L8.5 0L11.2 3H9.5V16Z" fill="#fff" stroke="#333" /><path d="M5 6.5Q1 7.5 1.5 10Q3 12.5 8 12.5M12 6.5Q17 8 15 10.2Q12 12 8 12.4" fill="none" stroke="#333" strokeWidth="1.3" />
      <path d="M1.5 12.5L6 9.5V15.5Z" fill="#222" />
    </Draw>
    <Caret className="ml-[4px]" />
    <Draw box="0 0 17 17" w={17} h={17} className="ml-[6px]">
      <path d="M.7 6H16V15.5H.7Z" fill="#fff" stroke="#444" strokeWidth="1.3" /><rect x="3.6" y="9" width="9" height="4" fill="#cdd2da" stroke="#444" /><path d="M2 5L7 1.5V4.5H14" fill="none" stroke="#444" strokeWidth="1.3" />
    </Draw>
    <Draw box="0 0 17 17" w={17} h={17} className="ml-[9px]">
      <path d="M5 15.5Q2 12 .8 9.5Q1.5 8 4.3 10L3 4Q3.8 2.6 5 4L6.2 8L6 1.8Q7.2 .4 8.2 1.8L8.8 7.5L10.4 2Q11.8 1 12.2 2.6L11.4 8.2L13.8 4.8Q15.4 4.2 15.2 6L13 12L12 16Z" fill="#fff" stroke="#333" strokeWidth="1" />
    </Draw>
    <Draw box="0 0 17 17" w={17} h={17} className="ml-[9px]">
      <path d="M8 9L13 14.5" stroke="#333" strokeWidth="2.6" /><circle cx="5.2" cy="6.2" r="4.4" fill="#eaf1f3" stroke="#555" /><path d="M11 3H16M13.5 .5V5.5M11 7.2H16" stroke="#333" strokeWidth="1" />
    </Draw>
    <Draw box="0 0 17 17" w={17} h={17} className="ml-[9px]">
      <path d="M.5 .5H16.5V16.5H.5Z" fill="none" stroke="#333" strokeDasharray="2 2" /><path d="M10.5 10.5L15.5 15.5" stroke="#333" strokeWidth="2.8" /><circle cx="7" cy="7" r="5.8" fill="#e3ecee" stroke="#666" strokeWidth="1.2" />
    </Draw>
    <Caret className="ml-[4px]" />
    <Draw box="0 0 17 17" w={17} h={17} className="ml-[14px]">
      <path d="M.7 1H15.8V12H.7Z" fill="#fff" stroke="#333" strokeWidth="1.2" /><rect x="3" y="3" width="10.5" height="6.8" fill="#8db0e0" stroke="#3d4e75" /><path d="M5.5 12.5V15.5H11V12.5" fill="#fff" stroke="#333" />
    </Draw>
    <Caret className="ml-[1px]" />
    <Draw box="0 0 17 17" w={17} h={17} className="ml-[7px]">
      <rect x=".5" y=".5" width="16" height="16" fill="#e9ebf0" /><path d="M.5 .5V16.5M3.7 .5V16.5M6.9 .5V16.5M10.1 .5V16.5M13.3 .5V16.5M16.5 .5V16.5M.5 .5H16.5M.5 3.7H16.5M.5 6.9H16.5M.5 10.1H16.5M.5 13.3H16.5M.5 16.5H16.5" stroke="#5a5e68" strokeWidth=".9" />
    </Draw>
    <Caret className="ml-[1px]" />
    <Draw box="0 0 17 17" w={17} h={17} className="ml-[7px]">
      {[[1, 2], [9, 2], [1, 9.5], [9, 9.5]].map(([x, y]) => <g key={`${x}-${y}`}><rect x={x} y={y} width="7.2" height="6" fill="#9db8e4" stroke="#44557c" /><rect x={x + 2} y={y + 1.8} width="3.2" height="2.4" fill="#c8d7f0" stroke="#55698f" strokeWidth=".6" /></g>)}
    </Draw>
    <Caret className="ml-[1px]" />
  </div>
);

/* ---------- timeline ---------- */

const Loft = () => (
  <Draw box="659 137 48 48" w={16} h={16}>
    <path d="M659 138H708V158L692 178H675L659 158Z" fill="#4e9fd8" /><path d="M659 138H708L694 166H674Z" fill="#7cc0f0" />
    <circle cx="684" cy="173" r="11" fill="#fafafa" stroke="#444" strokeWidth="3" />
  </Draw>
);
const CopyPaste = () => (
  <Draw box="732 137 48 48" w={16} h={16}>
    <rect x="733" y="139" width="19" height="22" rx="6" fill="#fff" stroke="#444" strokeWidth="3" /><rect x="760" y="163" width="19" height="22" rx="6" fill="#fff" stroke="#444" strokeWidth="3" />
    <path d="M741 166V177H750" fill="none" stroke="#1c5da5" strokeWidth="4" /><path d="M748 169L758 177L748 184Z" fill="#1c5da5" />
  </Draw>
);
const CircPattern = () => (
  <Draw box="948 137 48 48" w={16} h={16}>
    {[[972, 143], [989, 152], [989, 173], [972, 181], [955, 173]].map(([x, y]) => <circle key={`${x}-${y}`} cx={x} cy={y} r="6" fill="#5ea8df" />)}
    <circle cx="956" cy="153" r="5" fill="#ddd" stroke="#555" strokeWidth="3" />
  </Draw>
);
const PipeIcon = () => (
  <Draw box="1164 137 48 48" w={16} h={16}><path d="M1174 169L1202 157" stroke="#4a95cf" strokeWidth="17" strokeLinecap="round" /><path d="M1174 166L1202 154" stroke="#7dbcf0" strokeWidth="9" strokeLinecap="round" /></Draw>
);
const PointArrow = () => (
  <Draw box="0 0 16 16" w={16} h={16}><circle cx="11.2" cy="9" r="4.3" fill="#9db9e3" stroke="#3c4a66" /><path d="M0 9L5 5V7.5H8V10.5H5V13Z" fill="#111" /></Draw>
);
const Frame = () => (
  <Draw box="0 0 16 16" w={16} h={16}><path d="M3 2.8L5.5 .4H15.6V10.5L13.2 12.8V2.8Z" fill="#6db2e4" /><rect x=".8" y="4" width="11.8" height="11.4" fill="#fff" stroke="#4a4a4a" strokeWidth="1.2" /><rect x="3.2" y="6.4" width="7" height="6.6" fill="#f2f2f2" stroke="#555" strokeWidth="1.1" /></Draw>
);
const FEATURES: Record<string, React.ReactNode> = {
  s: <SketchEdit />,
  p: <Draw box="150 268 96 96" w={16} h={16}><PlanesShape /></Draw>,
  l: <Loft />,
  c: <CopyPaste />,
  r: <Draw box="0 0 16 16" w={16} h={16}><RevolveSmall /></Draw>,
  o: <CircPattern />,
  i: <PipeIcon />,
  a: <PointArrow />,
  f: <Draw box="0 0 16 16" w={16} h={16}><FormSmall /></Draw>,
  b: <Draw box="453 270 96 96" w={16} h={16}><CombineShape /></Draw>,
  h: <Frame />,
};
const ORDER = "spslcsrosriiocasrfabhosrfabh".split("");

const Timeline = () => (
  <div className="flex h-[48px] shrink-0 border-t-2 border-[#c8c8c8] bg-[#f1f1f1]">
    <div className="flex h-full w-[142px] shrink-0 items-center gap-[12px] pl-[11px] pt-[2px] text-[#3f3f3f]">
      <Draw box="0 0 13 15" w={13} h={15}><path d="M0 .5H1.5V14.5H0ZM12.5 1V14L2 7.5Z" fill="currentColor" /></Draw>
      <Draw box="0 0 13 13" w={13} h={13}><path d="M9 .5V12.5L0 6.5ZM10.5 3.5H12.5V9.5H10.5Z" fill="currentColor" /></Draw>
      <Draw box="0 0 13 17" w={12} h={17}><path d="M0 .5L11.5 8.5L0 16.5Z" fill="currentColor" /></Draw>
      <Draw box="0 0 13 13" w={13} h={13}><path d="M4 .5V12.5L13 6.5ZM.5 3.5H2.5V9.5H.5Z" fill="currentColor" /></Draw>
      <Draw box="0 0 13 15" w={13} h={15}><path d="M.5 1V14L11 7.5ZM11 .5H12.5V14.5H11Z" fill="currentColor" /></Draw>
    </div>
    <div className="relative flex h-full">
      <div className="ml-[12px] mt-[33px] h-[8px] w-[649px] border-b-2 border-[#c6c6c6]" />
      <div className="absolute left-0 top-[15px] flex">
        {ORDER.map((k, i) => (
          <div key={i} className="flex w-[24px] flex-col items-center">
            {FEATURES[k]}
            <i className="mt-[3px] h-[6px] w-[2px] bg-[#c6c6c6]" />
          </div>
        ))}
      </div>
      <Draw box="0 0 12 32" w={12} h={32} className="absolute left-[666px] top-[9px]"><path d="M0 0H12V4L7 9V32H5V9L0 4Z" fill="#636363" /></Draw>
    </div>
    <div className="ml-auto mr-[12px] mt-[16px]"><Gear c="#848484" hole="#f1f1f1" /></div>
  </div>
);

export default function App() {
  return (
    <div className={SANS + " flex h-[1037px] w-[1607px] flex-col overflow-hidden border-l-2 border-t border-l-[#0a7cb0] border-t-[#24455c] bg-white"}>
      <TitleBar />
      <TabBar />
      <Ribbon />
      <div className="relative h-[844px] shrink-0 overflow-hidden bg-white">
        <Scene />
        <div className="absolute left-[4px] top-[4px]"><Browser /></div>
        <div className="absolute left-[4px] top-[815px]"><PanelHeader title="COMMENTS" plus /></div>
        <div className="absolute left-[676px] top-[816px]"><NavBar /></div>
        <div className="absolute left-[1493px] top-[15px]"><ViewCube /></div>
      </div>
      <Timeline />
    </div>
  );
}
